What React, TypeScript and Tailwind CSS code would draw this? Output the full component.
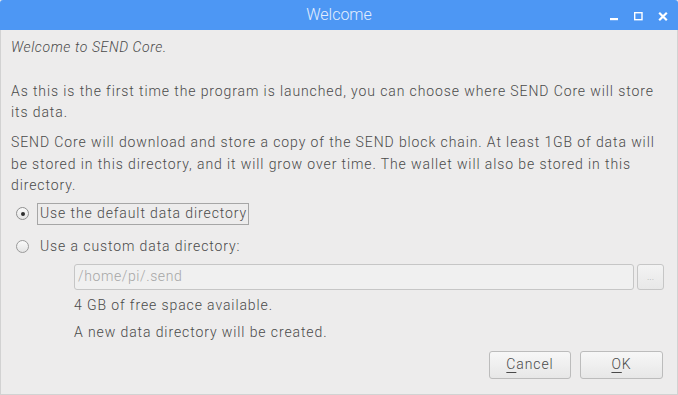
export default function App() {
  return (
    <div className="w-[678px] h-[395px] flex flex-col bg-[#edecec] text-[#4a4a4a] font-['Roboto',sans-serif] font-light overflow-hidden">
      {/* Title bar */}
      <div className="h-[30px] shrink-0 bg-[#4d97f4] relative flex items-center justify-center rounded-tl-[3px] rounded-tr-[3px]">
        <span className="text-[16px] text-[#e3eefd] font-light">Welcome</span>
        <div className="absolute left-[610px] top-[12px] flex items-center gap-[15px]">
          <svg width="9" height="9" viewBox="0 0 9 9">
            <rect x="0" y="6" width="8" height="2.2" fill="#ffffff" />
          </svg>
          <svg width="9" height="9" viewBox="0 0 9 9">
            <rect x="0.7" y="0.7" width="7.3" height="7" fill="none" stroke="#ffffff" strokeWidth="1.4" />
          </svg>
          <svg width="10" height="9" viewBox="0 0 10 9">
            <path d="M1.2 0.8 L8.8 8.2 M8.8 0.8 L1.2 8.2" stroke="#ffffff" strokeWidth="2.2" />
          </svg>
        </div>
      </div>

      {/* Body */}
      <div className="flex-1 flex flex-col border-x border-b border-[#d2d2d2] pl-[10px] pr-[12px] pt-[7px] text-[14px] leading-[21px] tracking-[0.9px]">
        <p className="italic tracking-[0.6px]">Welcome to SEND Core.</p>
        <p className="mt-[23px]">
          As this is the first time the program is launched, you can choose where SEND Core will store its data.
        </p>
        <p className="mt-[9px] leading-[21.5px]">
          SEND Core will download and store a copy of the SEND block chain. At least 1GB of data will be stored in this directory, and it will grow over time. The wallet will also be stored in this directory.
        </p>

        <div className="mt-[6px] flex items-center pl-[5px]">
          <span className="w-[13px] h-[13px] rounded-full border border-[#8f8f8f] bg-gradient-to-b from-[#fafafa] to-[#e4e4e4] flex items-center justify-center">
            <span className="w-[4px] h-[4px] rounded-full bg-[#2e2e2e]" />
          </span>
          <span className="ml-[8px] h-[22px] border border-[#a6a6a6] pl-[2px] pr-[1px] flex items-center">Use the default data directory</span>
        </div>

        <div className="mt-[11px] h-[22px] flex items-center pl-[5px]">
          <span className="w-[13px] h-[13px] rounded-full border border-[#9a9a9a] bg-gradient-to-b from-[#fafafa] to-[#e4e4e4]" />
          <span className="ml-[11px]">Use a custom data directory:</span>
        </div>

        <div className="mt-[6px] ml-[63px] flex items-center gap-[3px]">
          <div className="w-[560px] h-[26px] rounded-[3px] border border-[#c6c6c6] bg-[#f0f0f0] pl-[3px] flex items-center text-[#a6a6a6] tracking-[0.6px]">
            /home/pi/.send
          </div>
          <div className="w-[27px] h-[26px] rounded-[3px] border border-[#c6c6c6] bg-gradient-to-b from-[#f3f3f3] to-[#e8e8e8] flex items-center justify-center text-[10px] tracking-normal text-[#b4b4b4]">
            ...
          </div>
        </div>

        <p className="mt-[5px] ml-[63px]">4 GB of free space available.</p>
        <p className="mt-[6px] ml-[63px]">A new data directory will be created.</p>

        <div className="mt-[8px] flex justify-end gap-[9px] pr-[2px]">
          <button className="w-[82px] h-[28px] rounded-[3px] border border-[#bcbcbc] bg-gradient-to-b from-[#f7f7f7] to-[#e7e7e7] text-[14px] tracking-[0.9px] text-[#4a4a4a] font-light">
            <span className="underline underline-offset-[3px]">C</span>ancel
          </button>
          <button className="w-[83px] h-[28px] rounded-[3px] border border-[#bcbcbc] bg-gradient-to-b from-[#f7f7f7] to-[#e7e7e7] text-[14px] tracking-[0.9px] text-[#4a4a4a] font-light">
            <span className="underline underline-offset-[3px]">O</span>K
          </button>
        </div>
      </div>
    </div>
  );
}
